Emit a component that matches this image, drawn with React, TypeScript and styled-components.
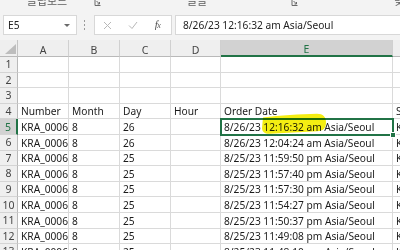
import React from "react";
import styled, { createGlobalStyle, css } from "styled-components";

const GREEN = "#217346";
const GRID_LINE = "#dadada";
const HEAD_BG = "#efefef";
const HEAD_ACTIVE_BG = "#d2d2d2";

const GlobalStyle = createGlobalStyle`
  html, body {
    margin: 0;
    padding: 0;
    background: #ffffff;
  }
  body {
    font-family: "Noto Sans", "Noto Sans CJK KR", sans-serif;
  }
`;

const Window = styled.div`
  position: relative;
  width: 400px;
  height: 250px;
  overflow: hidden;
  background: #ffffff;
`;

/* ribbon group labels, cut off at the top */
const Ribbon = styled.div`
  display: grid;
  grid-template-columns: 103px 197px 1fr;
  height: 11px;
  background: #f3f3f3;
  overflow: hidden;
`;

const RibbonGroup = styled.div<{ $pad?: number }>`
  display: grid;
  grid-template-columns: 1fr 9px;
  align-items: start;
  padding-left: ${({ $pad }) => $pad || 0}px;
`;

const RibbonLabel = styled.span<{ $left?: boolean }>`
  margin-top: -6px;
  font-family: "Noto Sans CJK KR", sans-serif;
  font-size: 11px;
  line-height: 13px;
  color: #5e5e5e;
  text-align: ${({ $left }) => ($left ? "left" : "center")};
  white-space: nowrap;
`;

const Launcher = () => (
  <svg width="7" height="7" viewBox="0 0 7 7">
    <path d="M1 -1 V5.5 H6.5" fill="none" stroke="#6a6a6a" strokeWidth="1" />
    <path d="M2.5 1 L5.5 4 M5.5 2 V4 H3.5" fill="none" stroke="#6a6a6a" strokeWidth="1" />
  </svg>
);

/* name box + formula bar */
const FormulaBar = styled.div`
  display: flex;
  align-items: flex-start;
  height: 29px;
  padding: 4px 0 0 3px;
  box-sizing: border-box;
  background: #f3f3f3;
`;

const Box = styled.div`
  height: 20px;
  box-sizing: border-box;
  background: #ffffff;
  border: 1px solid #d8d8d8;
  font-size: 10.2px;
  line-height: 12px;
  color: #222222;
`;

const NameBox = styled(Box)`
  width: 74px;
  display: flex;
  align-items: center;
  justify-content: space-between;
  padding: 0 6px 0 4px;
`;

const DropArrow = styled.span`
  width: 0;
  height: 0;
  border-left: 3px solid transparent;
  border-right: 3px solid transparent;
  border-top: 3px solid #6a6a6a;
`;

const Grip = styled.div`
  display: flex;
  flex-direction: column;
  gap: 2px;
  margin: 5px 0 0 7px;
`;

const GripDot = styled.span`
  width: 1px;
  height: 2px;
  background: #9a9a9a;
`;

const FuncBox = styled(Box)`
  width: 78px;
  margin-left: 9px;
  display: grid;
  grid-template-columns: repeat(3, 25px);
  align-items: center;
  justify-items: center;
`;

const Fx = styled.span`
  font-family: "Liberation Serif", serif;
  font-style: italic;
  font-size: 11px;
  color: #555555;
  letter-spacing: -0.5px;
`;

const FxSub = styled.span`
  font-size: 8px;
`;

const FormulaInput = styled(Box)`
  flex: 1;
  margin-left: 3px;
  border-right: none;
  display: flex;
  align-items: center;
  padding-left: 7px;
  white-space: nowrap;
`;

/* spreadsheet grid */
const Sheet = styled.div`
  display: grid;
  grid-template-columns: 18px 51px 51px 51px 50px 172px 60px;
  grid-template-rows: 17px;
  grid-auto-rows: 15.6px;
  font-family: "Noto Sans", sans-serif;
`;

const Corner = styled.div`
  display: flex;
  align-items: flex-end;
  justify-content: flex-end;
  padding: 0 1px 2px 0;
  background: ${HEAD_BG};
  border-right: 1px solid #c4c4c4;
  border-bottom: 1px solid #b9b9b9;
`;

const ColHead = styled.div<{ $active?: boolean }>`
  display: flex;
  align-items: flex-end;
  justify-content: center;
  font-size: 10.5px;
  line-height: 12px;
  background: ${({ $active }) => ($active ? HEAD_ACTIVE_BG : HEAD_BG)};
  color: ${({ $active }) => ($active ? GREEN : "#444444")};
  border-right: 1px solid #d0d0d0;
  border-bottom: ${({ $active }) =>
    $active ? `2px solid ${GREEN}` : "1px solid #b9b9b9"};
`;

const RowHead = styled.div<{ $active?: boolean }>`
  display: flex;
  align-items: center;
  justify-content: center;
  font-size: 10.5px;
  line-height: 12px;
  background: ${({ $active }) => ($active ? HEAD_ACTIVE_BG : HEAD_BG)};
  color: ${({ $active }) => ($active ? GREEN : "#444444")};
  border-bottom: 1px solid #d4d4d4;
  border-right: ${({ $active }) =>
    $active ? `2px solid ${GREEN}` : "1px solid #b9b9b9"};
`;

const Cell = styled.div<{ $selected?: boolean }>`
  position: relative;
  display: flex;
  align-items: flex-end;
  padding: 0 0 1px 3px;
  font-size: 10.2px;
  line-height: 12px;
  color: #1b1b1b;
  white-space: nowrap;
  overflow: hidden;
  border-right: 1px solid ${GRID_LINE};
  border-bottom: 1px solid ${GRID_LINE};

  ${({ $selected }) =>
    $selected &&
    css`
      overflow: visible;
      outline: 2px solid ${GREEN};
      outline-offset: -1px;
      z-index: 2;
    `}
`;

const FillHandle = styled.span`
  position: absolute;
  right: -4px;
  bottom: -4px;
  width: 4px;
  height: 4px;
  background: ${GREEN};
  border: 1px solid #ffffff;
`;

const Highlight = styled.svg`
  position: absolute;
  left: 0;
  top: 0;
  z-index: 3;
  mix-blend-mode: multiply;
  pointer-events: none;
`;

const columns = ["A", "B", "C", "D", "E", "F"];

const times = [
  "8/26/23 12:16:32 am Asia/Seoul",
  "8/26/23 12:04:24 am Asia/Seoul",
  "8/25/23 11:59:50 pm Asia/Seoul",
  "8/25/23 11:57:40 pm Asia/Seoul",
  "8/25/23 11:57:30 pm Asia/Seoul",
  "8/25/23 11:54:27 pm Asia/Seoul",
  "8/25/23 11:50:37 pm Asia/Seoul",
  "8/25/23 11:49:08 pm Asia/Seoul",
  "8/25/23 11:48:10 pm Asia/Seoul",
];

const rows: string[][] = [
  ["", "", "", "", "", ""],
  ["", "", "", "", "", ""],
  ["", "", "", "", "", ""],
  ["Number", "Month", "Day", "Hour", "Order Date", "Status"],
  ...times.map((t, i) => [
    "KRA_000681" + (20 - i),
    "8",
    i < 2 ? "26" : "25",
    "",
    t,
    "Korea",
  ]),
];

const ACTIVE_ROW = 5;
const ACTIVE_COL = 4;

const App = () => {
  return (
    <Window>
      <GlobalStyle />
      <Ribbon>
        <RibbonGroup>
          <RibbonLabel>클립보드</RibbonLabel>
          <Launcher />
        </RibbonGroup>
        <RibbonGroup>
          <RibbonLabel>글꼴</RibbonLabel>
          <Launcher />
        </RibbonGroup>
        <RibbonGroup $pad={94}>
          <RibbonLabel $left>맞춤</RibbonLabel>
        </RibbonGroup>
      </Ribbon>

      <FormulaBar>
        <NameBox>
          <span>E5</span>
          <DropArrow />
        </NameBox>
        <Grip>
          <GripDot />
          <GripDot />
          <GripDot />
        </Grip>
        <FuncBox>
          <svg width="9" height="9" viewBox="0 0 9 9">
            <path d="M1 1 L8 8 M8 1 L1 8" stroke="#b8b8b8" strokeWidth="1" />
          </svg>
          <svg width="10" height="9" viewBox="0 0 10 9">
            <path d="M1 4.5 L4 7.5 L9 1" fill="none" stroke="#b8b8b8" strokeWidth="1" />
          </svg>
          <Fx>
            f<FxSub>x</FxSub>
          </Fx>
        </FuncBox>
        <FormulaInput>{times[0]}</FormulaInput>
      </FormulaBar>

      <Sheet>
        <Corner>
          <svg width="11" height="10" viewBox="0 0 11 10">
            <path d="M11 0 V10 H0 Z" fill="#bdbdbd" />
          </svg>
        </Corner>
        {columns.map((c, i) => (
          <ColHead key={c} $active={i === ACTIVE_COL}>
            {c}
          </ColHead>
        ))}
        {rows.map((cells, r) => (
          <React.Fragment key={r}>
            <RowHead $active={r + 1 === ACTIVE_ROW}>{r + 1}</RowHead>
            {cells.map((v, c) => {
              const selected = r + 1 === ACTIVE_ROW && c === ACTIVE_COL;
              return (
                <Cell key={c} $selected={selected}>
                  {v}
                  {selected && <FillHandle />}
                </Cell>
              );
            })}
          </React.Fragment>
        ))}
      </Sheet>

      <Highlight width="400" height="250" viewBox="0 0 400 250">
        <path
          d="M263 117.5 C280 115.5 300 114 317 113.8 C323 113.8 326 117 326 122.5 C326 128.5 323 131 317 131.2 L270 133.8 C265 134 262 132 262 128 Z"
          fill="#f4ee12"
        />
      </Highlight>
    </Window>
  );
};

export default App;
